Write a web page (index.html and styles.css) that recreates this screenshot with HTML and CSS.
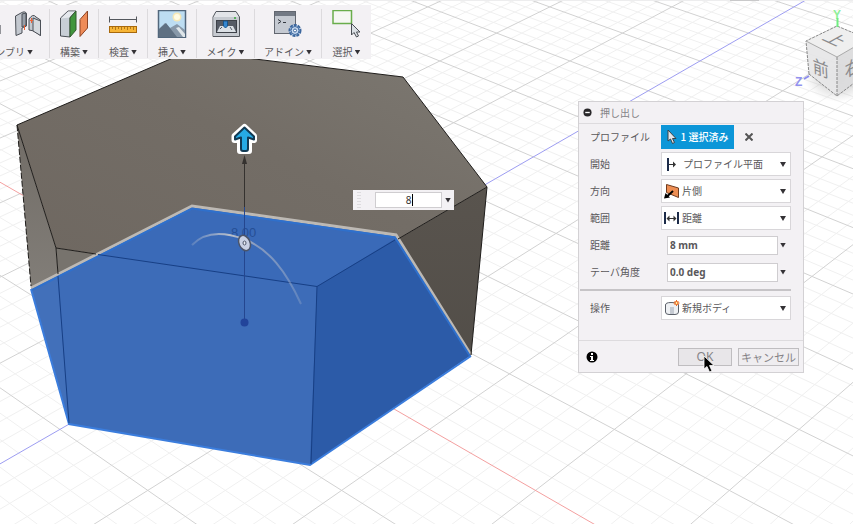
FILE: index.html
```html
<!DOCTYPE html>
<html lang="ja">
<head>
<meta charset="utf-8">
<meta name="viewport" content="width=device-width, initial-scale=1">
<title>押し出し</title>
<link rel="stylesheet" href="styles.css">
</head>
<body>
<main class="workspace">
  <svg class="scene" viewBox="0 0 853 524" preserveAspectRatio="xMinYMin slice" role="img" aria-label="モデル">
    <defs>
      <linearGradient id="top" x1="0" y1="1" x2="1" y2="0"><stop offset="0" stop-color="#6e6760"/><stop offset=".55" stop-color="#736d66"/><stop offset="1" stop-color="#7d7972"/></linearGradient>
      <linearGradient id="left" x1="0" y1="0" x2="0" y2="1"><stop offset="0" stop-color="#716c66"/><stop offset="1" stop-color="#8f8c87"/></linearGradient>
      <linearGradient id="right" x1="0" y1="0" x2="0" y2="1"><stop offset="0" stop-color="#59544e"/><stop offset="1" stop-color="#4e4a45"/></linearGradient>
      <linearGradient id="arc" x1="0" y1="0" x2="1" y2="0"><stop offset="0" stop-color="#a9b6cc" stop-opacity=".3"/><stop offset=".35" stop-color="#b9bfca"/><stop offset=".6" stop-color="#8599be"/><stop offset="1" stop-color="#a9b6cc" stop-opacity=".3"/></linearGradient>
      <radialGradient id="shade"><stop offset="0" stop-color="#777" stop-opacity=".55"/><stop offset="1" stop-color="#999" stop-opacity="0"/></radialGradient>
    </defs>
    <path id="minor" class="grid-minor"/>
    <path id="major" class="grid-major"/>
    <path id="axis-x" class="axis-x"/>
    <path id="axis-z" class="axis-z"/>

    <path fill="url(#top)" d="M17 125 189 51 403 77 487 187 317 286.500 56 248Z"/>
    <path fill="url(#left)" d="M17 125 56 248 69 424 31 288Z"/>
    <path fill="#77736d" d="M56 248 317 286.500 310 465 69 424Z"/>
    <path fill="url(#right)" d="M317 286.500 487 187 471 355 310 465Z"/>
    <path class="face" fill="#3a6ab8" d="M31 288 192 207 395 235 471 355 310 465 69 424Z"/>
    <path fill="#4270ba" d="M31 288 57.500 275 69 424Z"/>
    <path fill="#3d6cb8" d="M57.500 275 99 254 317 286.500 310 465 69 424Z"/>
    <path fill="#2c5ba8" d="M317 286.500 395 239 471 355 310 465Z"/>
    <path class="sketch-edge" d="M31 289 69 424 310 465 471 356"/>
    <path class="rim" d="M31 288 192 206 396 235 471 355"/>
    <path class="rim-inner" d="M32 290 192 208.500 395 237.500 470 356"/>
    <path class="edge" d="M17 125 189 51 403 77 487 187 471 355M17 125 56 248 96 254M56 248 58 274M398 239 487 187"/>
    <path class="edge edge-dashed" d="M17 125 31 286"/>
    <path class="edge-blue" d="M98 254.500 317 286.500 395 240M317 286.500 311 464M58 276 69 423"/>

    <text class="dimension" x="231" y="237">8.00</text>
    <path stroke="#35322f" d="M244.500 160V207"/>
    <path fill="#35322f" d="M244.500 155 247 164H242Z"/>
    <path stroke="#24468f" d="M244.500 207V322"/>
    <circle cx="244.500" cy="322.500" r="4" fill="#22449a"/>
    <path fill="none" stroke="url(#arc)" stroke-width="2" d="M192 245C204 232 222 231 244 239C269 249 286 271 301 304"/>
    <ellipse cx="244.500" cy="243" rx="5.500" ry="8" transform="rotate(-24 244.500 243)" fill="#c9d1e4" stroke="#4c5569" stroke-width="1.500"/>
    <ellipse cx="244.500" cy="243" rx="1.500" ry="2" fill="#e9edf5" stroke="#4c5569"/>
    <g stroke-linejoin="round">
      <path fill="#fff" stroke="#fff" stroke-width="6" d="M244.500 127 254 136V140H249V151H240V140H234.500V136Z"/>
      <path fill="#26aae4" stroke="#123b55" stroke-width="2" d="M244.500 127.500 254 136.500V139.500L248 137.500V149Q248 151 246 151H243Q241 151 241 149V137.500L235 139.500V136.500Z"/>
    </g>

    <g class="view-cube">
      <ellipse cx="838" cy="77" rx="34" ry="25" fill="url(#shade)"/>
      <path fill="#eee" fill-opacity=".95" d="M806 41 837 26 868 39 837 57Z"/>
      <path fill="#e7e7e8" fill-opacity=".95" d="M806 41 837 57 837 96 809 74Z"/>
      <path fill="#dcdcdd" fill-opacity=".95" d="M868 39 837 57V96L866 74Z"/>
      <path fill="none" stroke="#888" stroke-dasharray="3 1" d="M809 74 806 41 837 26 868 39M837 57V96M809 74 837 96 866 74"/>
      <path fill="none" stroke="#aaa" d="M806 41 837 57 868 39"/>
      <text class="cube-text" transform="matrix(.9 .42 -.9 .5 832 33)" x="0" y="12">上</text>
      <text class="cube-text" transform="matrix(.9 .35 .05 1 813 72)" x="0" y="0">前</text>
      <text class="cube-text" transform="matrix(.9 -.45 .05 1 845 78)" x="0" y="0">右</text>
      <text class="axis-name axis-name-y" x="833" y="19">Y</text>
      <path stroke="#70ee80" stroke-width="2" d="M837.500 18V27"/>
      <text class="axis-name axis-name-z" x="795" y="86">Z</text>
      <path stroke="#8c8cee" stroke-width="2" d="M804 79 809 76"/>
    </g>
    <path fill="#ededee" d="M0 0H853V1H0Z"/>
    <path fill="#c9c9ca" d="M730 0H759V1H730Z"/>
  </svg>

  <nav class="toolbar" aria-label="ツールバー">
    <button class="tool tool-assemble" type="button">
      <svg class="icon icon-wide" viewBox="0 0 50 28"><path fill="#aeb3ba" stroke="#33373d" d="M0 12 9 15V24L4 27 0 26Z"/><path fill="#c3c8cf" stroke="#4b4f56" d="M24.500 6 30 3Q34 .5 35.500 3.500V16L31 18V23L25 25.500Z"/><path fill="#989fa8" stroke="#4b4f56" d="M31 4 35 3V15L31 17Z"/><path fill="#c3c8cf" stroke="#4b4f56" d="M38 9Q42 3 45 7L49.500 10V25.500L43 21 38 20Z"/><path fill="#d5d9de" stroke="#4b4f56" d="M42 8 49.500 11V25.500L42 21Z"/><path stroke="#ee6135" d="M33.500 15V20M40.500 8V13M39 10.500H42"/></svg>
      <span class="tool-label">アセンブリ<i class="caret"></i></span>
    </button>
    <button class="tool" type="button">
      <svg class="icon" viewBox="0 0 30 28"><path fill="#c8ced6" stroke="#4a4e55" d="M1.500 8 9 1H17L11 7V27L1.500 26Z"/><path fill="#e5e8ed" d="M2 8.500 9 1.500H16L10.500 7.500Z"/><path fill="#41953c" stroke="#315a2d" d="M11 8 17 1V20L11 27Z"/><path fill="#ee8b58" stroke="#8d4324" d="M21 9.500 28.500 1V18L21 26.500Z"/></svg>
      <span class="tool-label">構築<i class="caret"></i></span>
    </button>
    <button class="tool" type="button">
      <svg class="icon" viewBox="0 0 30 28"><path stroke="#54575d" d="M2 9.500H28M1.500 6.500V12.500M28.500 6.500V12.500"/><rect x="1.500" y="16.500" width="27" height="6" fill="#f7b536" stroke="#a8690d"/><path stroke="#b0781b" d="M4.500 17V19M7.500 17V20M10.500 17V19M13.500 17V20M16.500 17V19M19.500 17V20M22.500 17V19M25.500 17V20"/></svg>
      <span class="tool-label">検査<i class="caret"></i></span>
    </button>
    <button class="tool" type="button">
      <svg class="icon" viewBox="0 0 30 28"><rect x="1.500" y=".5" width="27" height="27" fill="#bdddf2" stroke="#52677c" stroke-width="1.500"/><circle cx="20" cy="7" r="4.500" fill="#f5e8b8"/><circle cx="20" cy="7" r="3" fill="#fffbe3"/><path fill="#8798a9" d="M2 19 8 13 13 18 20 14 28 20V27H2Z"/><path fill="#5f7082" d="M2 19 9 13 20 27H2Z"/><path fill="#dfe6ea" d="M19 18 22 17 28 24V27H26Z"/></svg>
      <span class="tool-label">挿入<i class="caret"></i></span>
    </button>
    <button class="tool tool-make" type="button">
      <svg class="icon" viewBox="0 0 30 28"><path fill="#e2e4e8" stroke="#54585f" d="M2 7 5 1.500H25L28.500 7V26.500H2Z"/><path fill="#c6cad0" d="M2.500 7H28V26H2.500Z"/><rect x="5.500" y="10.500" width="20" height="12" fill="#555b65" stroke="#3d4148"/><path fill="#dbe0e5" d="M9 16H22L25 22H6Z"/><path fill="#3487d0" stroke="#18558c" d="M12.500 11H16.500V16L14.500 18 12.500 16Z"/><path stroke="#555d68" d="M9 19 11 17M19 17 21 20"/><circle cx="24" cy="8" r="1" fill="#35a43a"/></svg>
      <span class="tool-label">メイク<i class="caret"></i></span>
    </button>
    <button class="tool tool-addin" type="button">
      <svg class="icon" viewBox="0 0 30 28"><rect x="1.500" y="1.500" width="21" height="22" fill="#c5cad2" stroke="#626770"/><path fill="#737a85" d="M2 2H22V6H2Z"/><path fill="none" stroke="#343940" d="M5 9.500 8 11.500 5 13.500M10 12.500H13"/><circle cx="22" cy="20.500" r="5.500" fill="#bbd3ee" stroke="#3c679e" stroke-width="2" stroke-dasharray="3 1"/><circle cx="22" cy="20.500" r="4" fill="#c8daf0" stroke="#3c679e"/><circle cx="22" cy="20.500" r="1.500" fill="#fff" stroke="#3c679e"/></svg>
      <span class="tool-label">アドイン<i class="caret"></i></span>
    </button>
    <button class="tool" type="button">
      <svg class="icon" viewBox="0 0 30 28"><rect x="1" y=".5" width="18.500" height="13" fill="#f5f7f3" stroke="#69ad4b" stroke-width="1.500"/><path fill="#dbe0e5" stroke="#4a4e54" d="M19.500 13.500V25L22 22.500 24.500 27 26.500 26 24.500 22H28Z"/></svg>
      <span class="tool-label">選択<i class="caret"></i></span>
    </button>
  </nav>

  <div class="value-box">
    <span class="grip"></span>
    <span class="value-field"><input class="value-input" type="text" value="8" aria-label="距離"></span>
    <button class="drop" type="button" aria-label="値のオプション"><i class="caret"></i></button>
  </div>

  <form class="dialog" aria-labelledby="dialog-title">
    <header class="dialog-head">
      <svg class="round-icon" viewBox="0 0 10 10"><circle cx="5" cy="5" r="4.500" fill="#29272a"/><path stroke="#fff" stroke-width="1.500" d="M2.500 5H7.500"/></svg>
      <h1 class="dialog-title" id="dialog-title">押し出し</h1>
    </header>
    <div class="dialog-body">
      <div class="row">
        <label for="profile">プロファイル</label>
        <div class="selection">
          <button class="selected" id="profile" type="button">
            <svg class="pointer-icon" viewBox="0 0 10 16"><path fill="#e4e6e9" stroke="#3b4248" d="M1 1V12L3.500 10 5.500 14.500 7.500 13.500 5.500 9.500H9Z"/></svg>1 選択済み
          </button>
          <button class="clear" type="button" aria-label="選択を解除"><svg class="clear-icon" viewBox="0 0 8 8"><path stroke="#555" stroke-width="2" d="M.5 .5 7.500 7.500M7.500 .5 .5 7.500"/></svg></button>
        </div>
      </div>
      <div class="row">
        <label for="start">開始</label>
        <div class="field">
          <svg class="field-icon" viewBox="0 0 16 16"><path stroke="#1c2b49" stroke-width="2" d="M4 2V15"/><path stroke="#333" d="M5 8.500H11"/><path fill="#333" d="M9 5.500 12 8.500 9 11.500Z"/></svg>
          <select class="select" id="start"><option>プロファイル平面</option></select><i class="caret"></i>
        </div>
      </div>
      <div class="row">
        <label for="direction">方向</label>
        <div class="field field-close">
          <svg class="field-icon" viewBox="0 0 16 16"><path fill="#ee8e53" stroke="#6f3c20" d="M2.500 1.500 14.500 5V14.500L2.500 9.500Z"/><path stroke="#000" stroke-width="2" d="M3 13.500 9 8"/><path fill="#000" d="M0 15.500 1.500 10 6 14.500Z"/></svg>
          <select class="select" id="direction"><option>片側</option></select><i class="caret"></i>
        </div>
      </div>
      <div class="row">
        <label for="extent">範囲</label>
        <div class="field field-close">
          <svg class="field-icon" viewBox="0 0 16 16"><path stroke="#1c2b49" stroke-width="2" d="M1 2V14M14 2V14"/><path stroke="#333" d="M4 8.500H11"/><path fill="#333" d="M2.500 8.500 5.500 5.500V11.500ZM12.500 8.500 9.500 5.500V11.500Z"/></svg>
          <select class="select" id="extent"><option>距離</option></select><i class="caret"></i>
        </div>
      </div>
      <div class="row">
        <label for="distance">距離</label>
        <div class="measure"><input class="measure-input" id="distance" type="text" value="8 mm"><button class="drop" type="button" aria-label="距離のオプション"><i class="caret"></i></button></div>
      </div>
      <div class="row">
        <label for="taper">テーパ角度</label>
        <div class="measure"><input class="measure-input" id="taper" type="text" value="0.0 deg"><button class="drop" type="button" aria-label="角度のオプション"><i class="caret"></i></button></div>
      </div>
      <hr class="divider">
      <div class="row">
        <label for="operation">操作</label>
        <div class="field field-close">
          <svg class="field-icon" viewBox="0 0 16 16"><path fill="#eef0f3" stroke="#5b6069" d="M1.500 5Q1.500 2.500 7 2.500Q14.500 2.500 14.500 5V12Q14.500 14.500 11 14.500H5Q1.500 14.500 1.500 12Z"/><path fill="#c5cad2" d="M6 7H10V14H6Z"/><path stroke="#ed6a23" d="M12.500 0V6M9.500 3H15.500M10.500 1 14.500 5M14.500 1 10.500 5"/><circle cx="12.500" cy="3" r="1.500" fill="#fff3a5" stroke="#ed6a23"/></svg>
          <select class="select" id="operation"><option>新規ボディ</option></select><i class="caret"></i>
        </div>
      </div>
    </div>
    <footer class="dialog-foot">
      <svg class="info-icon" viewBox="0 0 12 12"><circle cx="6" cy="6" r="5.500" fill="#000"/><path fill="#fff" d="M5 2H7V4H5ZM4 5H7V9H8V10H4V9H5V6H4Z"/></svg>
      <button class="btn btn-ok" type="button">OK
        <svg class="cursor" viewBox="0 0 12 18"><path fill="#000" stroke="#fff" stroke-width=".8" d="M1 1V14L4 11.500 6.500 17 9 16 6.500 10.500H11Z"/></svg>
      </button>
      <button class="btn" type="button">キャンセル</button>
    </footer>
  </form>
</main>
<script src="grid.js"></script>
</body>
</html>
```
FILE: styles.css
```css
* { box-sizing: border-box; }

body {
  margin: 0;
  font: 10px/12px "Noto Sans CJK JP", sans-serif;
  color: #5a585b;
  background: #fff;
}

button, input, select { font: inherit; color: inherit; border-radius: 0; margin: 0; }
button { padding: 0; border: 0; background: none; }

.workspace { position: relative; min-height: 100vh; overflow: hidden; }

/* Scene */
.scene { position: absolute; inset: 0; width: 100%; height: 100%; }
.grid-minor, .grid-major, .axis-x, .axis-z { fill: none; }
.grid-minor { stroke: #f0f0f0; }
.grid-major { stroke: #d2d2d2; }
.axis-x { stroke: #f4a0a0; }
.axis-z { stroke: #9d9df2; }
.edge { fill: none; stroke: #1f1d1b; }
.edge-dashed { stroke-dasharray: 6 2; }
.edge-blue { fill: none; stroke: #173f85; }
.rim { fill: none; stroke: #bdb9b4; stroke-width: 3; }
.rim-inner { fill: none; stroke: #2f70cc; stroke-width: 2; }
.sketch-edge { fill: none; stroke: #3b7ddd; stroke-width: 2; }
.dimension { font: 13px "Liberation Sans", sans-serif; fill: #264f95; }
.cube-text { font-size: 18px; fill: #8b8b8d; }
.axis-name { font: bold 12px "Liberation Sans", sans-serif; }
.axis-name-y { fill: #8ff09a; }
.axis-name-z { fill: #9191ee; }

/* Toolbar */
.toolbar {
  position: relative;
  display: flex;
  width: max-content;
  margin-top: 5px;
  height: 54px;
  padding: 4px 0 1px;
  background: #f3f1f4;
}
.tool {
  display: flex;
  flex-direction: column;
  align-items: center;
  justify-content: space-between;
  width: 49px;
  padding-top: 1px;
  border-right: 1px solid #dcdadd;
}
.tool:last-child { border-right: 0; }
.tool-assemble { align-items: flex-end; width: 50px; padding-right: 8px; overflow: hidden; }
.tool-assemble .tool-label { padding-right: 8px; }
.tool-make { width: 58px; }
.tool-addin { width: 67px; }
.icon { flex: none; width: 30px; height: 28px; }
.icon-wide { width: 50px; }
.tool-label { display: flex; align-items: center; gap: 2px; white-space: nowrap; }

.caret {
  flex: none;
  width: 6px;
  height: 5px;
  background: #343236;
  clip-path: polygon(0 0, 100% 0, 50% 100%);
}

/* Value box on the canvas */
.value-box {
  position: absolute;
  left: 353px;
  top: 190px;
  display: flex;
  align-items: center;
  width: 101px;
  height: 20px;
  background: #f3f1f4;
}
.grip { width: 4px; height: 16px; margin: 0 14px 0 4px; background: repeating-linear-gradient(#dddbde 0 1px, transparent 1px 3px); }
.value-field { position: relative; flex: 1; height: 16px; }
.value-field::after { content: ""; position: absolute; left: 50%; top: 2px; width: 1px; height: 12px; margin-left: 3px; background: #000; }
.value-input { display: block; width: 100%; height: 100%; padding: 0; border: 1px solid #cfcdd0; text-align: center; background: #fff; font-family: "Noto Sans", sans-serif; color: #333; }
.drop { display: flex; align-items: center; justify-content: center; width: 12px; height: 16px; }

/* Extrude dialog */
.dialog {
  position: absolute;
  left: 578px;
  top: 101px;
  width: 226px;
  border: 1px solid #d3d1d4;
  background: #f3f1f4;
}
.dialog-head { display: flex; align-items: center; gap: 8px; height: 22px; padding: 0 4px; border-bottom: 1px solid #dddbde; }
.round-icon { width: 9px; height: 9px; }
.dialog-title { margin: 0; font-size: 10px; font-weight: 400; color: #858387; }
.dialog-body { display: grid; grid-template-columns: minmax(0, 1fr); gap: 3px; padding: 1px 0 20px; }
.row { display: grid; grid-template-columns: 71px minmax(0, 1fr); align-items: center; height: 24px; padding: 0 12px 0 11px; white-space: nowrap; }
.selection { display: flex; align-items: center; height: 24px; gap: 9px; }
.selected { display: flex; align-items: center; justify-content: center; gap: 4px; width: 73px; height: 24px; background: #0c96d8; color: #fff; font-weight: 500; }
.pointer-icon { width: 10px; height: 16px; }
.clear { display: grid; place-items: center; width: 12px; height: 12px; }
.clear-icon { width: 8px; height: 8px; }
.field { position: relative; height: 24px; }
.field-icon { position: absolute; left: 3px; top: 4px; width: 16px; height: 16px; }
.select { appearance: none; width: 100%; height: 100%; padding: 0 16px 0 21px; border: 1px solid #d8d6d9; background: #fff; }
.field-close .select { padding-left: 20px; }
.field .caret { position: absolute; right: 5px; top: 10px; }
.measure { display: flex; align-items: center; padding: 0 3px 0 6px; }
.measure-input { flex: 1; min-width: 0; height: 19px; padding: 0 2px; border: 1px solid #cfcdd0; background: #fff; font-family: "Noto Sans", sans-serif; font-weight: 700; }
.measure .drop { width: 10px; }
.divider { width: auto; height: 2px; margin: 2px 12px 2px 1px; border: 0; background: #c6c4c7; }
.dialog-foot { display: flex; align-items: center; gap: 6px; height: 32px; padding: 0 4px 0 7px; border-top: 1px solid #dddbde; }
.info-icon { width: 12px; height: 12px; margin-right: auto; }
.btn { position: relative; width: 61px; height: 18px; border: 1px solid #bfbdc0; background: #efedf0; color: #858387; font-size: 11px; }
.btn-ok { width: 54px; background: #e8e6e9; font-family: "Noto Sans", sans-serif; font-size: 12px; }
.cursor { position: absolute; left: 24px; top: 6px; width: 12px; height: 18px; }
```
FILE: grid.js
```js
// Ground plane: u runs along the red axis, w along the blue axis.
function project(u, w) {
  const depth = 1 / (0.0008787 - 0.00003755 * (u + w));
  const x = 244.7 + (u - w) / 2 * 0.1485 * depth;
  return x.toFixed(1) + " " + (depth - 815).toFixed(1);
}

const NEAR = 5;
const FAR = -10;

function alongZ(u) {
  return "M" + project(u, FAR - u) + "L" + project(u, NEAR - u);
}

function alongX(w) {
  return "M" + project(FAR - w, w) + "L" + project(NEAR - w, w);
}

let minor = "";
let major = "";
for (let i = -75; i <= 75; i++) {
  const lines = alongZ(i / 5) + alongX(i / 5);
  if (i % 5) minor += lines;
  else if (i) major += lines;
}

document.getElementById("minor").setAttribute("d", minor);
document.getElementById("major").setAttribute("d", major);
document.getElementById("axis-x").setAttribute("d", alongX(0));
document.getElementById("axis-z").setAttribute("d", alongZ(0));
```
